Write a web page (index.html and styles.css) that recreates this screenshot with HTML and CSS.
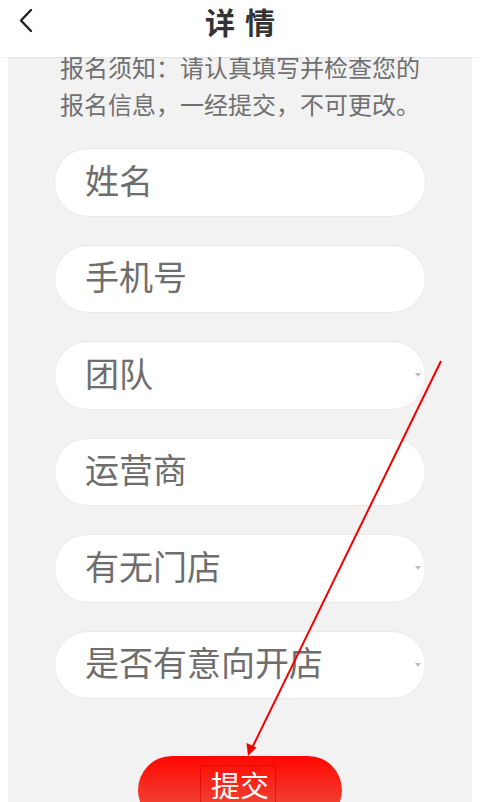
FILE: index.html
```html
<!DOCTYPE html>
<html lang="zh-CN">
<head>
<meta charset="utf-8">
<title>详情</title>
<link rel="stylesheet" href="styles.css">
</head>
<body>
<div class="page">
  <header class="topbar">
    <div class="back">
      <svg width="16" height="26" viewBox="0 0 16 26"><path d="M12 2 L2 12.5 L12 23" fill="none" stroke="#222" stroke-width="2.4" stroke-linecap="round" stroke-linejoin="round"/></svg>
    </div>
    <h1 class="title">详情</h1>
    <div></div>
  </header>
  <main class="panel">
    <p class="notice">报名须知：请认真填写并检查您的报名信息，一经提交，不可更改。</p>
    <div class="fields">
      <div class="field"><span>姓名</span></div>
      <div class="field"><span>手机号</span></div>
      <div class="field"><span>团队</span><i class="caret"></i></div>
      <div class="field"><span>运营商</span></div>
      <div class="field"><span>有无门店</span><i class="caret"></i></div>
      <div class="field"><span>是否有意向开店</span><i class="caret"></i></div>
    </div>
    <div class="actions">
      <button class="submit">提交</button>
    </div>
  </main>
  <div class="mark-box"></div>
  <svg class="mark-arrow" width="480" height="802" viewBox="0 0 480 802">
    <line x1="441" y1="361" x2="252" y2="748" stroke="#f20000" stroke-width="2"/>
    <path d="M248 756 L246.5 743 L256.5 747.5 Z" fill="#f20000"/>
  </svg>
</div>
</body>
</html>
```

FILE: styles.css
```css
html, body {
  margin: 0;
  padding: 0;
  background: #fff;
}
body {
  font-family: "Noto Sans CJK SC", "Noto Sans", sans-serif;
  overflow: hidden;
}
.page {
  position: relative;
  width: 480px;
  height: 802px;
  overflow: hidden;
}
.topbar {
  height: 57px;
  display: grid;
  grid-template-columns: 1fr auto 1fr;
  align-items: start;
  background: #fff;
  box-shadow: 0 1px 1px rgba(0,0,0,0.05);
  position: relative;
  z-index: 1;
}
.back {
  padding: 8px 0 0 19px;
  height: 26px;
}
.back svg { display: block; }
.title {
  margin: 0;
  font-size: 30px;
  font-weight: 700;
  line-height: 43px;
  color: #333;
  letter-spacing: 10px;
  padding-left: 10px;
}
.panel {
  margin: 0 8px;
  background: #f2f2f2;
  height: 745px;
  overflow: hidden;
}
.notice {
  margin: -9px 0 0;
  padding: 0 48px 0 52px;
  font-size: 24px;
  line-height: 37px;
  color: #707070;
}
.fields {
  margin: 26px 46px 0 46px;
  display: flex;
  flex-direction: column;
  gap: 28px;
}
.field {
  box-sizing: border-box;
  height: 68.5px;
  background: #fff;
  border: 1px solid #e9e9e9;
  border-radius: 34px;
  display: flex;
  align-items: center;
  justify-content: space-between;
  padding: 0 4px 5px 30px;
  font-size: 34px;
  color: #6e6e6e;
}
.field span { line-height: 1; }
.caret {
  width: 0;
  height: 0;
  margin-top: 5px;
  border-left: 3.5px solid transparent;
  border-right: 3.5px solid transparent;
  border-top: 4px solid #bdbdbd;
}
.actions {
  display: flex;
  justify-content: center;
  margin-top: 57px;
}
.submit {
  width: 204px;
  height: 68px;
  border: none;
  border-radius: 34px;
  background: linear-gradient(#ff0600, #ec5846);
  color: #fff;
  font-family: "Noto Sans CJK SC", sans-serif;
  font-size: 29px;
  line-height: 1;
  padding: 0 0 12px;
}
.mark-box {
  position: absolute;
  left: 200px;
  top: 765px;
  width: 74px;
  height: 50px;
  border: 1px solid rgba(210, 0, 0, 0.6);
}
.mark-arrow {
  position: absolute;
  left: 0;
  top: 0;
  pointer-events: none;
}
```
